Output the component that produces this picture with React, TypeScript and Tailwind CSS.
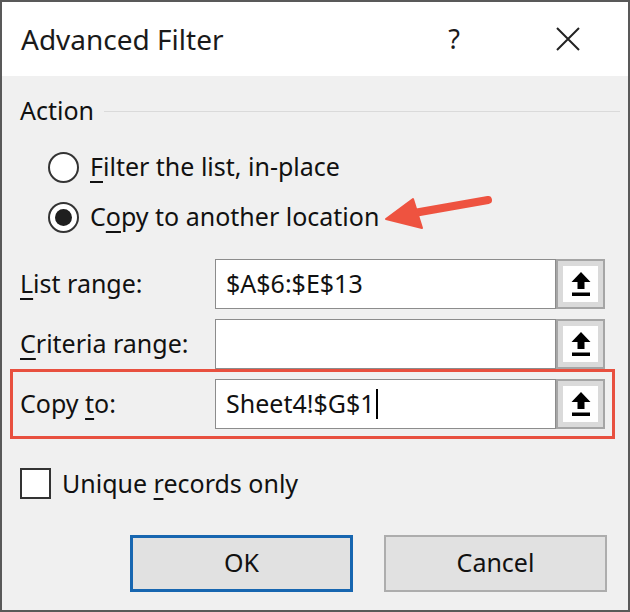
import React from "react";

function UploadIcon() {
  return (
    <svg width="22" height="26" viewBox="0 0 22 26">
      <path d="M11 1 L20.5 11 L14.5 11 L14.5 18 L7.5 18 L7.5 11 L1.5 11 Z" fill="#000" />
      <rect x="2" y="21.5" width="18" height="3.5" fill="#000" />
    </svg>
  );
}

function RefInput({ value, cursor }: { value: string; cursor?: boolean }) {
  return (
    <div className="flex h-[50px] flex-1">
      <div className="flex flex-1 items-center border border-[#8c8c8c] bg-white pl-[10px] text-[25px] text-[#111]">
        <span>{value}</span>
        {cursor && <span className="ml-[1px] inline-block h-[30px] w-[2px] bg-black" />}
      </div>
      <div className="flex h-[50px] w-[49px] items-center justify-center border-2 border-[#a5a5a5] bg-[#dadada] p-[5px]">
        <div className="flex h-full w-full items-center justify-center bg-white">
          <UploadIcon />
        </div>
      </div>
    </div>
  );
}

export default function App() {
  return (
    <div className="relative flex h-[612px] w-[630px] flex-col border-2 border-[#595959] bg-[#f0f0f0] font-['Noto_Sans',sans-serif] text-[#111]">
      {/* Title bar */}
      <div className="flex h-[74px] items-center bg-white pl-[19px] pr-[48px]">
        <span className="flex-1 text-[28px] text-[#1a1a1a]">Advanced Filter</span>
        <span className="mr-[96px] text-[27px] text-[#1a1a1a]">?</span>
        <svg width="24" height="24" viewBox="0 0 24 24">
          <path d="M1 1 L23 23 M23 1 L1 23" stroke="#222" strokeWidth="2" />
        </svg>
      </div>

      <div className="flex flex-col px-[18px]">
        {/* Action group */}
        <div className="mt-[20px] flex h-[30px] items-center">
          <span className="text-[25px]">Action</span>
          <div className="ml-[10px] mr-[-10px] h-[1px] flex-1 bg-[#dadada]" />
        </div>
        <div className="mt-[16px] flex h-[50px] items-center pl-[28px]">
          <div className="h-[31px] w-[31px] rounded-full border-2 border-[#333] bg-white" />
          <span className="ml-[11px] text-[25px]">
            <span className="underline underline-offset-[5px]">F</span>ilter the list, in-place
          </span>
        </div>
        <div className="flex h-[50px] items-center pl-[28px]">
          <div className="flex h-[31px] w-[31px] items-center justify-center rounded-full border-2 border-[#333] bg-white">
            <div className="h-[17px] w-[17px] rounded-full bg-[#1f1f1f]" />
          </div>
          <span className="ml-[11px] text-[25px]">
            C<span className="underline underline-offset-[5px]">o</span>py to another location
          </span>
        </div>

        {/* Ranges */}
        <div className="mt-[17px] flex flex-col gap-[10px] pr-[5px]">
          <div className="flex items-center">
            <span className="w-[195px] text-[25px]">
              <span className="underline underline-offset-[5px]">L</span>ist range:
            </span>
            <RefInput value="$A$6:$E$13" />
          </div>
          <div className="flex items-center">
            <span className="w-[195px] text-[25px]">
              <span className="underline underline-offset-[5px]">C</span>riteria range:
            </span>
            <RefInput value="" />
          </div>
          <div className="flex items-center outline-[3px] outline-offset-[7px] outline-[#e8503f] outline-solid">
            <span className="w-[195px] text-[25px]">
              Copy <span className="underline underline-offset-[5px]">t</span>o:
            </span>
            <RefInput value="Sheet4!$G$1" cursor />
          </div>
        </div>

        {/* Checkbox */}
        <div className="mt-[36px] flex items-center">
          <div className="h-[31px] w-[31px] border-2 border-[#333] bg-white" />
          <span className="ml-[11px] text-[25px]">
            Unique <span className="underline underline-offset-[5px]">r</span>ecords only
          </span>
        </div>

        {/* Buttons */}
        <div className="mt-[32px] flex justify-end gap-[31px] pr-[3px]">
          <button className="flex h-[57px] w-[223px] items-center justify-center border-[3px] border-[#1766b0] bg-[#e1e1e1] text-[25px]">
            OK
          </button>
          <button className="flex h-[57px] w-[223px] items-center justify-center border-2 border-[#adadad] bg-[#e1e1e1] text-[25px]">
            Cancel
          </button>
        </div>
      </div>

      {/* Annotation arrow */}
      <svg className="absolute left-[378px] top-[183px]" width="120" height="50" viewBox="0 0 120 50">
        <line x1="108" y1="15" x2="34" y2="28" stroke="#ee5340" strokeWidth="8" strokeLinecap="round" />
        <path d="M6 34 L33 14 L42 43 Z" fill="#ee5340" stroke="#ee5340" strokeWidth="2" strokeLinejoin="round" />
      </svg>
    </div>
  );
}
